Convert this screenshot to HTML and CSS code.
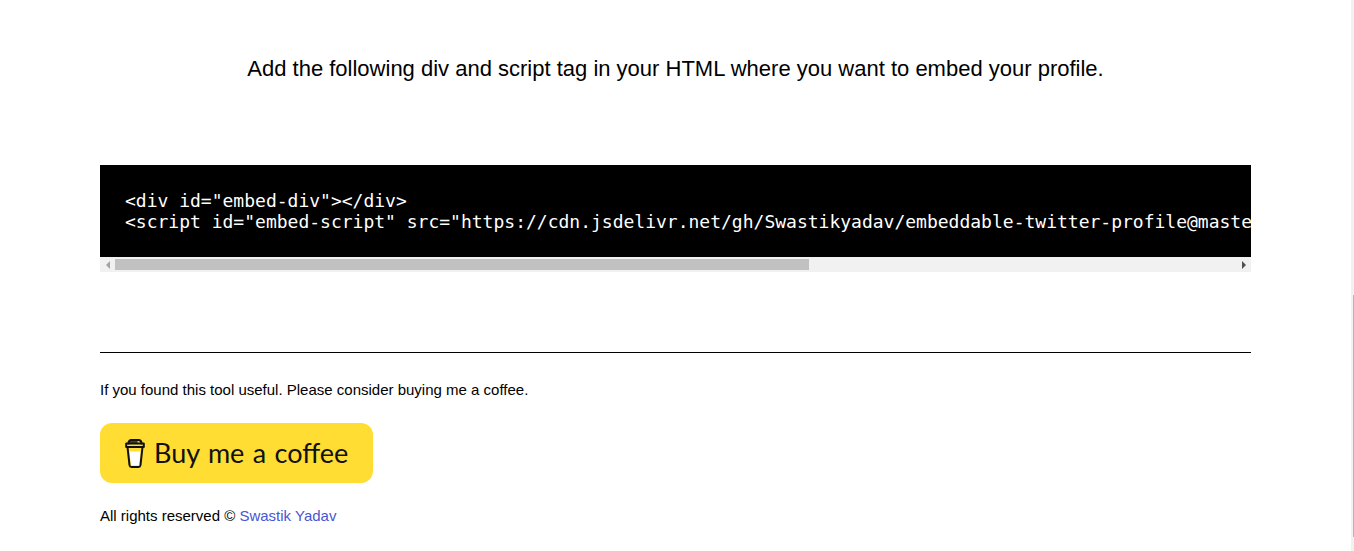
FILE: index.html
```html
<!DOCTYPE html>
<html lang="en">
<head>
<meta charset="utf-8">
<title>Embed your profile</title>
<link rel="stylesheet" href="styles.css">
</head>
<body>
<div class="page-scrollbar"><div class="page-thumb"></div></div>
<main class="page">
  <h2 class="intro">Add the following div and script tag in your HTML where you want to embed your profile.</h2>
  <div class="code-box">
    <pre class="code">&lt;div id="embed-div"&gt;&lt;/div&gt;
&lt;script id="embed-script" src="https://cdn.jsdelivr.net/gh/Swastikyadav/embeddable-twitter-profile@master/embed.js"&gt;&lt;/script&gt;</pre>
    <div class="hbar">
      <span class="arrow arrow-left"></span>
      <div class="hbar-track"><div class="hbar-thumb"></div></div>
      <span class="arrow arrow-right"></span>
    </div>
  </div>
  <hr class="rule">
  <p class="note">If you found this tool useful. Please consider buying me a coffee.</p>
  <a class="coffee" href="#">
    <svg class="cup" width="20" height="29" viewBox="0 0 20 29" fill="none" stroke="#111" stroke-width="2" stroke-linejoin="round" stroke-linecap="round">
      <path d="M4.500 12.500H15.500L14 26.500H6Z" fill="#fff" stroke="none"/>
      <path d="M2.500 8L4.500 26.200C4.700 27.400 5.300 28 6.500 28H13.500C14.700 28 15.300 27.400 15.500 26.200L17.500 8"/>
      <path d="M1.200 4.500H18.800V8H1.200Z"/>
      <path d="M3.500 4.500C3.500 2 4.500 1 6.500 1H13.500C15.500 1 16.500 2 16.500 4.500"/>
      <path d="M5.500 3H12" stroke-width="1.500"/>
    </svg>
    <span class="coffee-label">Buy me a coffee</span>
  </a>
  <p class="footer">All rights reserved © <a class="author" href="#">Swastik Yadav</a></p>
</main>
</body>
</html>
```
FILE: styles.css
```css
html, body { margin: 0; padding: 0; height: 551px; overflow: hidden; background: #fff; }
body { font-family: "Liberation Sans", Arial, sans-serif; color: #000; }
.page { box-sizing: border-box; width: 1351px; padding: 55px 100px 0; }
.intro { margin: 0; font-size: 22px; line-height: 27px; font-weight: 400; text-align: center; color: #000; }
.code-box { margin-top: 83px; }
.code { margin: 0; height: 92px; box-sizing: border-box; padding: 25px; overflow: hidden; background: #000; color: #fff; font: 18px/21px "DejaVu Sans Mono", monospace; white-space: pre; }
.hbar { display: flex; height: 15px; background: #f1f1f1; align-items: stretch; }
.hbar-track { flex: 1; padding: 2px 0; box-sizing: border-box; }
.hbar-thumb { height: 11px; width: 694px; background: #c1c1c1; }
.arrow { width: 15px; display: flex; align-items: center; justify-content: center; }
.arrow::before { content: ""; border-style: solid; border-color: transparent; border-width: 4px; }
.arrow-left::before { border-right-color: #a3a3a3; border-left-width: 0; }
.arrow-right::before { border-left-color: #505050; border-right-width: 0; }
.rule { margin: 80px 0 0; border: 0; height: 1px; background: #000; }
.note { margin: 28px 0 0; font-size: 15px; line-height: 18px; }
.coffee { margin-top: 24px; display: flex; width: 273px; height: 60px; gap: 9px; box-sizing: border-box; padding-left: 25px; align-items: center; background: #ffdd33; border-radius: 12px; color: #111; text-decoration: none; font: 400 27px/34px "Lato", sans-serif; }
.coffee-label { word-spacing: 1.5px; }
.cup { flex: none; }
.footer { margin: 24px 0 0; font-size: 15px; line-height: 18px; }
.author { color: #4a56d0; text-decoration: none; }
.page-scrollbar { position: fixed; top: 0; right: 0; bottom: 0; width: 3px; background: #f1f1f1; }
.page-thumb { position: absolute; top: 295px; bottom: 14px; left: 2px; right: 0; background: #b5b5b5; }
```
